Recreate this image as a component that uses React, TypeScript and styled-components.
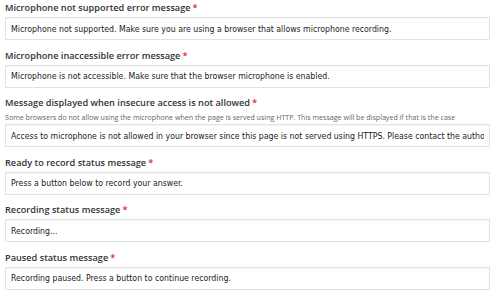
import React from "react";
import styled, { createGlobalStyle } from "styled-components";

const GlobalStyle = createGlobalStyle`
  body {
    margin: 0;
    background: #ffffff;
    font-family: "Open Sans", "Liberation Sans", sans-serif;
  }
`;

const Form = styled.div`
  width: 485px;
  padding: 0 0 0 5px;
`;

const Field = styled.div`
  margin-bottom: 7.5px;
`;

const Label = styled.div`
  font-size: 9.2px;
  font-weight: 600;
  line-height: 16px;
  color: #333333;
  margin-bottom: 1px;
  white-space: nowrap;
`;

const Required = styled.span`
  color: #e0261b;
  margin-left: 2px;
`;

const Description = styled.div`
  font-size: 7.1px;
  line-height: 10px;
  color: #666666;
  margin: 0 0 2px;
  white-space: nowrap;
`;

const Input = styled.input`
  display: block;
  box-sizing: border-box;
  width: 100%;
  height: 23px;
  margin: 0;
  padding: 0 5px;
  border: 1px solid #e2e2e2;
  border-radius: 0;
  box-shadow: inset 0 1px 1px rgba(0, 0, 0, 0.04);
  background: #ffffff;
  font-family: "DejaVu Sans Condensed", "DejaVu Sans", sans-serif;
  font-size: 8.7px;
  color: #222222;
  outline: none;
`;

const fields = [
  {
    label: "Microphone not supported error message",
    value:
      "Microphone not supported. Make sure you are using a browser that allows microphone recording.",
  },
  {
    label: "Microphone inaccessible error message",
    value: "Microphone is not accessible. Make sure that the browser microphone is enabled.",
  },
  {
    label: "Message displayed when insecure access is not allowed",
    description:
      "Some browsers do not allow using the microphone when the page is served using HTTP. This message will be displayed if that is the case",
    value:
      "Access to microphone is not allowed in your browser since this page is not served using HTTPS. Please contact the author of this content and ask him to make this available using HTTPS",
  },
  {
    label: "Ready to record status message",
    value: "Press a button below to record your answer.",
  },
  { label: "Recording status message", value: "Recording..." },
  {
    label: "Paused status message",
    value: "Recording paused. Press a button to continue recording.",
  },
];

export default function App() {
  return (
    <>
      <GlobalStyle />
      <Form>
        {fields.map((f) => (
          <Field key={f.label}>
            <Label>
              {f.label}
              <Required>*</Required>
            </Label>
            {f.description && <Description>{f.description}</Description>}
            <Input defaultValue={f.value} readOnly />
          </Field>
        ))}
      </Form>
    </>
  );
}
